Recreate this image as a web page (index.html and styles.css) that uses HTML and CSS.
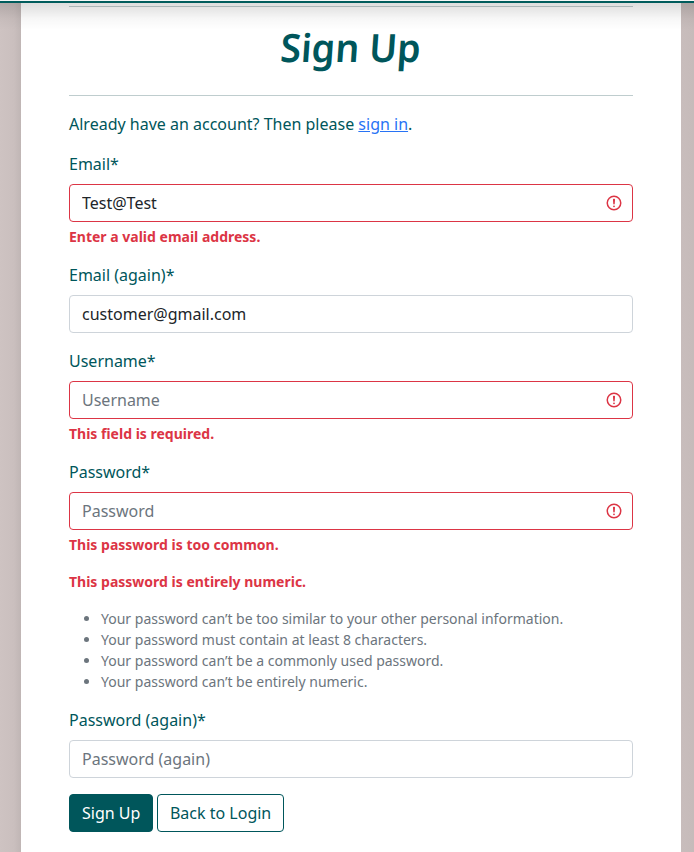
FILE: index.html
```html
<!DOCTYPE html>
<html lang="en">
<head>
<meta charset="utf-8">
<title>Sign Up</title>
<link rel="stylesheet" href="styles.css">
</head>
<body>
<div class="navbar-edge"></div>
<main class="card">
  <hr class="rule">
  <h1 class="title"><span class="title-text">Sign Up</span></h1>
  <hr class="rule">
  <p class="intro">Already have an account? Then please <a href="#">sign in</a>.</p>
  <form>
    <div class="field">
      <label for="email">Email*</label>
      <div class="control invalid"><input id="email" value="Test@Test">
        <svg class="alert" viewBox="0 0 12 12"><circle cx="6" cy="6" r="4.5"/><path d="M5.8 3.6h.4L6 6.5z"/><circle class="dot" cx="6" cy="8.2" r=".6"/></svg></div>
      <p class="error">Enter a valid email address.</p>
    </div>
    <div class="field">
      <label for="email2">Email (again)*</label>
      <div class="control"><input id="email2" value="customer@gmail.com"></div>
    </div>
    <div class="field">
      <label for="username">Username*</label>
      <div class="control invalid"><input id="username" placeholder="Username">
        <svg class="alert" viewBox="0 0 12 12"><circle cx="6" cy="6" r="4.5"/><path d="M5.8 3.6h.4L6 6.5z"/><circle class="dot" cx="6" cy="8.2" r=".6"/></svg></div>
      <p class="error">This field is required.</p>
    </div>
    <div class="field">
      <label for="password">Password*</label>
      <div class="control invalid"><input id="password" type="password" placeholder="Password">
        <svg class="alert" viewBox="0 0 12 12"><circle cx="6" cy="6" r="4.5"/><path d="M5.8 3.6h.4L6 6.5z"/><circle class="dot" cx="6" cy="8.2" r=".6"/></svg></div>
      <p class="error">This password is too common.</p>
      <p class="error next">This password is entirely numeric.</p>
      <ul class="hints">
        <li>Your password can’t be too similar to your other personal information.</li>
        <li>Your password must contain at least 8 characters.</li>
        <li>Your password can’t be a commonly used password.</li>
        <li>Your password can’t be entirely numeric.</li>
      </ul>
    </div>
    <div class="field">
      <label for="password2">Password (again)*</label>
      <div class="control"><input id="password2" type="password" placeholder="Password (again)"></div>
    </div>
    <div class="actions">
      <button class="btn primary" type="button">Sign Up</button>
      <button class="btn" type="button">Back to Login</button>
    </div>
  </form>
</main>
</body>
</html>
```
FILE: styles.css
```css
* { box-sizing: border-box; }
html { height: 100%; overflow: hidden; }
body {
  margin: 0;
  height: 852px;
  overflow: hidden;
  font: 16px/24px "Noto Sans", sans-serif;
  color: #00565b;
  background: linear-gradient(90deg, #cec3c2 0, #cabfbe 14px, #c0b6b5 21px, #c0b6b5 673px, #c8bdbc 681px, #c6bbba 100%);
}
.navbar-edge {
  position: absolute;
  top: 0;
  left: 0;
  right: 0;
  height: 30px;
  background: linear-gradient(#f4f7f7 1px, #005c5c 1px, #005c5c 3px, rgba(0, 0, 0, .135) 3px, rgba(0, 0, 0, .09) 10px, rgba(0, 0, 0, .03) 19px, transparent 30px);
}
.card {
  width: 660px;
  height: 852px;
  margin-left: 21px;
  padding: 6px 48px 0;
  background: #fff;
}
.rule { height: 1px; margin: 0; border: 0; background: #bfcdce; }
.title {
  margin: 16px 0 24px;
  font-size: 39px;
  line-height: 48px;
  font-weight: 600;
  text-align: center;
}
.title-text { display: inline-block; transform: skewX(-4deg) scaleX(.965); }
.intro { margin: 16px 0; }
.intro a { color: #2873f5; }
.field { margin-bottom: 16px; }
label { display: block; margin-bottom: 8px; }
.control {
  display: flex;
  align-items: center;
  height: 38px;
  padding: 0 9px 0 12px;
  border: 1px solid #ced4da;
  border-radius: 4px;
}
.control input {
  flex: 1;
  min-width: 0;
  height: 24px;
  padding: 0;
  border: 0;
  outline: 0;
  background: transparent;
  font: inherit;
  color: #212529;
}
.control input::placeholder { color: #6c757d; opacity: 1; }
.invalid { border-color: #dc3545; }
.alert { width: 18px; height: 18px; fill: none; stroke: #dc3545; stroke-linejoin: round; }
.alert .dot { fill: #dc3545; stroke: none; }
.error { margin: 4px 0 0; font-size: 14px; line-height: 21px; font-weight: 700; color: #dc3545; }
.error.next { margin-top: 16px; }
.hints { margin: 16px 0 0; padding-left: 32px; font-size: 14px; line-height: 21px; color: #6c757d; }
.actions { display: flex; gap: 4px; }
.btn {
  height: 38px;
  padding: 0 11.6px 0 12px;
  border: 1px solid #00565b;
  border-radius: 4px;
  background: #fff;
  color: #00565b;
  font: inherit;
}
.primary { background: #00565b; color: #fff; }
```
